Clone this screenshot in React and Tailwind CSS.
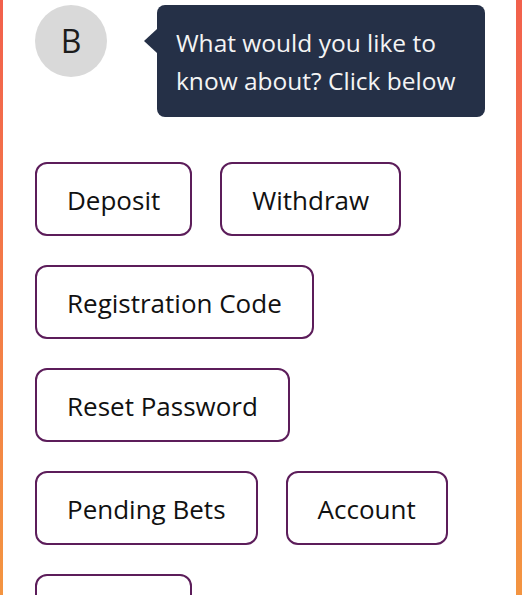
const options = [
  "Deposit",
  "Withdraw",
  "Registration Code",
  "Reset Password",
  "Pending Bets",
  "Account",
  "Contact",
];

const App = () => {
  return (
    <div
      className="min-h-screen bg-linear-to-b from-[#f2604c] to-[#f39c3e] pl-[3px] pr-[6px]"
      style={{ fontFamily: '"Open Sans", "Noto Sans", sans-serif' }}
    >
      <div className="min-h-screen bg-white pl-[32px] pt-[5px] pb-10">
        <div className="flex items-start">
          <div className="w-[72px] h-[72px] rounded-full bg-[#d9d9d9] flex items-center justify-center text-[32px] text-[#1c1c1c] shrink-0">
            B
          </div>
          <div className="relative ml-[50px] w-[328px] rounded-[8px] bg-[#253047] text-[#f4f4f4] text-[24.5px] leading-[38px] pl-[19px] pt-[19px] pb-[17px]">
            <span className="absolute left-[-13px] top-[24px] w-0 h-0 border-y-[12px] border-y-transparent border-r-[13px] border-r-[#253047]" />
            <div className="whitespace-nowrap">What would you like to</div>
            <div className="whitespace-nowrap">know about? Click below</div>
          </div>
        </div>

        <div className="flex flex-wrap gap-x-[28px] gap-y-[29px] mt-[45px]">
          {options.map((label) => (
            <button
              key={label}
              className="h-[74px] px-[30px] pt-[2px] flex items-center border-2 border-[#5c1d5a] rounded-xl bg-white text-[26px] text-[#111]"
            >
              {label}
            </button>
          ))}
        </div>
      </div>
    </div>
  );
};

export default App;
